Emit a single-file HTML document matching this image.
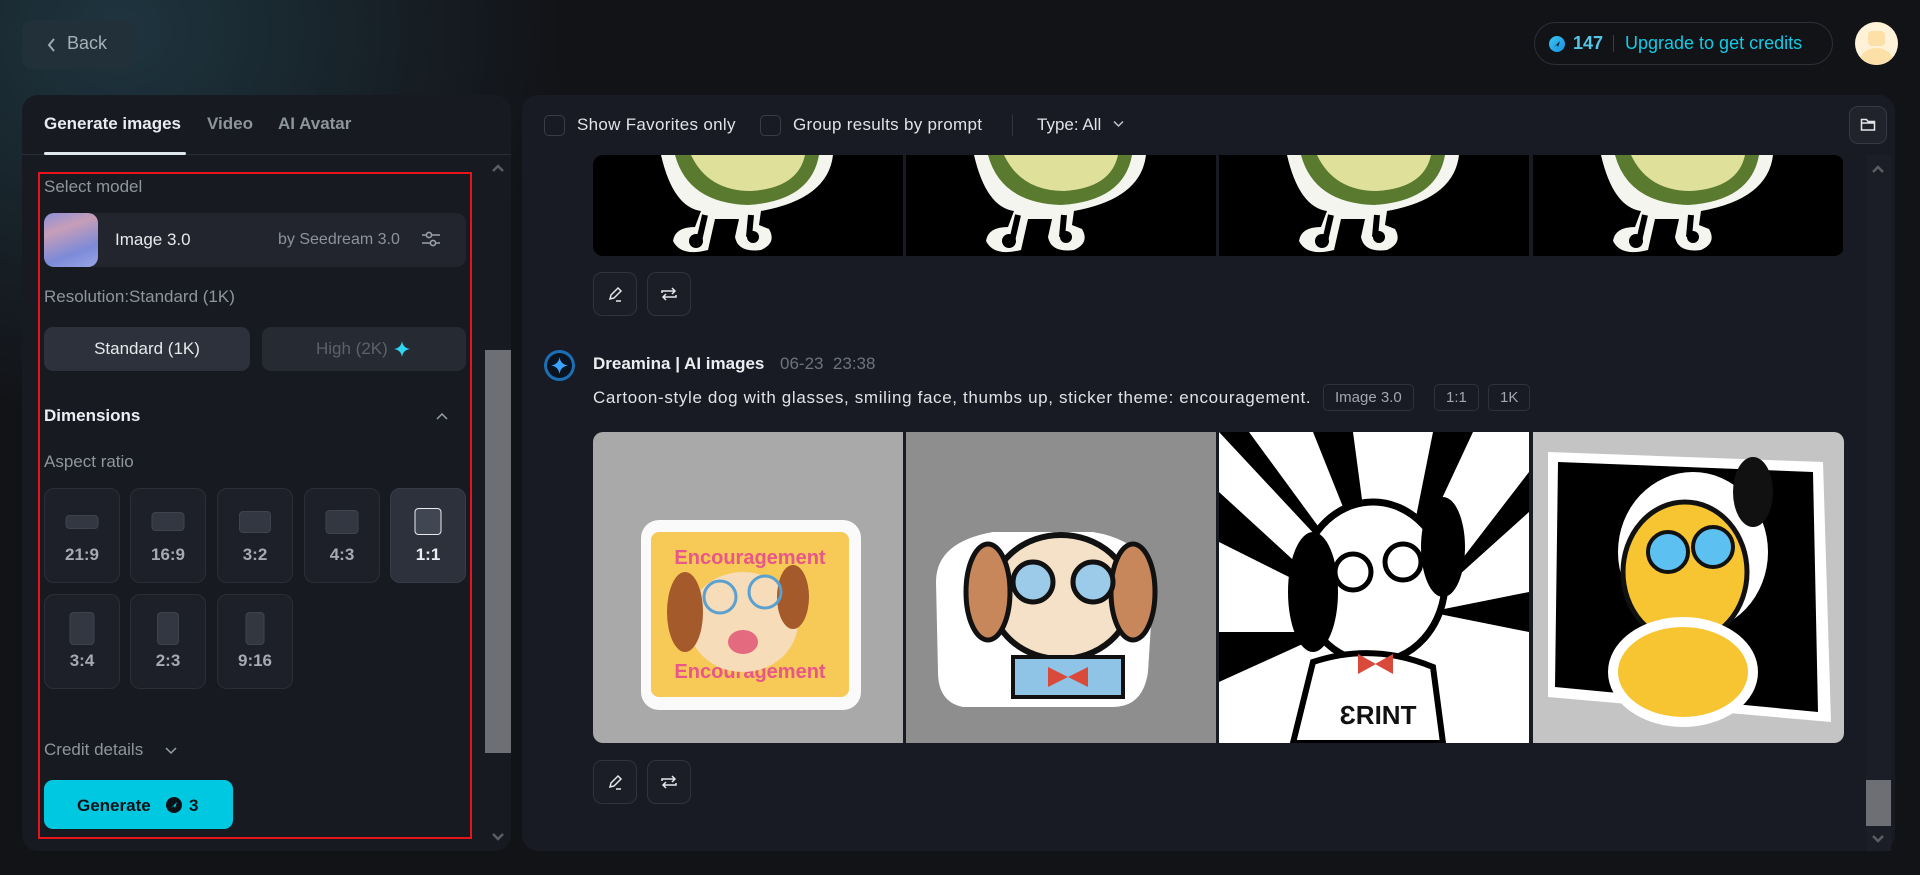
<!DOCTYPE html>
<html><head><meta charset="utf-8"><style>
*{box-sizing:border-box;margin:0;padding:0}
body{width:1920px;height:875px;overflow:hidden;background:#121317;font-family:"Liberation Sans",sans-serif;color:#e6e8ec;position:relative}
.a{position:absolute}
.glow{left:-200px;top:-250px;width:800px;height:700px;background:radial-gradient(ellipse at 40% 40%,rgba(40,80,95,.55),rgba(18,19,23,0) 65%)}
.t{position:absolute;white-space:nowrap}
.tile{position:absolute;width:76px;height:95px;background:#1d2028;border:1px solid #2b2e37;border-radius:10px}
.tile .s{position:absolute;left:50%;transform:translateX(-50%);background:#333741;border:1px solid #3f434c;border-radius:4px}
.tile .l{position:absolute;width:100%;text-align:center;top:56px;font-size:17px;font-weight:bold;color:#a6a9b1}
.ib{position:absolute;width:44px;height:44px;border:1px solid #30333c;background:#1b1e26;border-radius:9px}
.chip{position:absolute;top:384px;height:27px;border:1px solid #2f323b;border-radius:5px;font-size:15px;color:#a3a6ae;line-height:25px;padding:0 11px}
</style></head><body>
<div class="a glow"></div>
<!-- back -->
<div class="a" style="left:22px;top:20px;width:114px;height:49px;border-radius:10px;background:#213039"></div>
<svg class="a" style="left:47px;top:37px" width="10" height="16" viewBox="0 0 10 16"><path d="M7 2L2 8l5 6" stroke="#a0aab2" stroke-width="2" fill="none"/></svg>
<div class="t" style="left:67px;top:33px;font-size:18px;color:#a6b0b8">Back</div>
<!-- credits -->
<div class="a" style="left:1534px;top:22px;width:299px;height:43px;border:1px solid #2c2f36;border-radius:22px"></div>
<div class="a" style="left:1549px;top:36px;width:16px;height:16px;border-radius:50%;background:linear-gradient(135deg,#39c6f0,#1a8fe0)"></div>
<svg class="a" style="left:1552px;top:39px" width="10" height="10" viewBox="0 0 10 10"><path d="M2 8L8 2 6 8 5 6z" fill="#0d1a25"/></svg>
<div class="t" style="left:1573px;top:33px;font-size:18px;font-weight:bold;color:#54c6e8">147</div>
<div class="a" style="left:1613px;top:35px;width:1px;height:17px;background:#3a3d44"></div>
<div class="t" style="left:1625px;top:33px;font-size:18px;color:#13cbe6">Upgrade to get credits</div>
<div class="a" style="left:1855px;top:22px;width:43px;height:43px;border-radius:50%;background:#fff2d9;overflow:hidden"><div class="a" style="left:13px;top:9px;width:17px;height:15px;border-radius:4px;background:#fde0a8"></div><div class="a" style="left:5px;top:26px;width:33px;height:26px;border-radius:50%;background:#fde0a8"></div></div>

<!-- left panel -->
<div class="a" style="left:22px;top:95px;width:489px;height:756px;background:#171a21;border-radius:16px"></div>
<div class="t" style="left:44px;top:114px;font-size:17px;font-weight:bold;color:#e9ebef">Generate images</div>
<div class="t" style="left:207px;top:114px;font-size:17px;font-weight:bold;color:#8c949c">Video</div>
<div class="t" style="left:278px;top:114px;font-size:17px;font-weight:bold;color:#8c949c">AI Avatar</div>
<div class="a" style="left:22px;top:154px;width:489px;height:1px;background:#2a2d35"></div>
<div class="a" style="left:44px;top:152px;width:142px;height:3px;background:#dfe8ef;border-radius:2px"></div>
<svg class="a" style="left:491px;top:163px" width="14" height="10" viewBox="0 0 14 10"><path d="M2 8l5-5 5 5" stroke="#5a5d64" stroke-width="2.5" fill="none"/></svg>
<div class="a" style="left:485px;top:350px;width:26px;height:403px;background:#6e6f75"></div>
<svg class="a" style="left:491px;top:832px" width="14" height="10" viewBox="0 0 14 10"><path d="M2 2l5 5 5-5" stroke="#5a5d64" stroke-width="2.5" fill="none"/></svg>
<div class="a" style="left:38px;top:172px;width:434px;height:667px;border:2px solid #e8141c"></div>
<div class="t" style="left:44px;top:177px;font-size:17px;color:#8f959c">Select model</div>
<div class="a" style="left:44px;top:213px;width:422px;height:54px;background:#22252e;border-radius:10px"></div>
<div class="a" style="left:44px;top:213px;width:54px;height:54px;border-radius:10px;background:linear-gradient(160deg,#8e8fd8 0%,#c79eb8 30%,#7c8ad8 70%,#9aa5e6 100%)"></div>
<div class="t" style="left:115px;top:230px;font-size:17px;color:#e6e8ec">Image 3.0</div>
<div class="t" style="left:278px;top:231px;font-size:16px;color:#8d939b">by Seedream 3.0</div>
<svg class="a" style="left:421px;top:230px" width="20" height="18" viewBox="0 0 20 18"><g stroke="#9aa0a8" stroke-width="1.6" fill="none"><path d="M1 5h18M1 13h18"/><circle cx="8" cy="5" r="2.6" fill="#22252e"/><circle cx="12" cy="13" r="2.6" fill="#22252e"/></g></svg>
<div class="t" style="left:44px;top:287px;font-size:17px;color:#8f959c">Resolution:Standard (1K)</div>
<div class="a" style="left:44px;top:327px;width:206px;height:44px;background:#2d313b;border-radius:9px"></div>
<div class="t" style="left:44px;top:339px;width:206px;text-align:center;font-size:17px;color:#e6e8ec">Standard (1K)</div>
<div class="a" style="left:262px;top:327px;width:204px;height:44px;background:#262a33;border-radius:9px"></div>
<div class="t" style="left:316px;top:339px;font-size:17px;color:#5c616b">High (2K)</div>
<svg class="a" style="left:394px;top:341px" width="16" height="16" viewBox="0 0 16 16"><path d="M8 0Q9 7 16 8Q9 9 8 16Q7 9 0 8Q7 7 8 0z" fill="#2fd6f2"/></svg>
<div class="t" style="left:44px;top:406px;font-size:17px;font-weight:bold;color:#eceef1">Dimensions</div>
<svg class="a" style="left:436px;top:412px" width="12" height="8" viewBox="0 0 12 8"><path d="M1 7l5-5 5 5" stroke="#9aa0a8" stroke-width="1.5" fill="none"/></svg>
<div class="t" style="left:44px;top:452px;font-size:17px;color:#8f959c">Aspect ratio</div>
<div class="tile" style="left:44px;top:488px"><div class="s" style="top:26px;width:33px;height:14px"></div><div class="l">21:9</div></div>
<div class="tile" style="left:130px;top:488px"><div class="s" style="top:23px;width:33px;height:19px"></div><div class="l">16:9</div></div>
<div class="tile" style="left:217px;top:488px"><div class="s" style="top:22px;width:32px;height:22px"></div><div class="l">3:2</div></div>
<div class="tile" style="left:304px;top:488px"><div class="s" style="top:21px;width:33px;height:24px"></div><div class="l">4:3</div></div>
<div class="tile" style="left:390px;top:488px;background:#2c313c;border-color:#383c46"><div class="s" style="top:19px;width:27px;height:27px;background:#404652;border:1.5px solid #e8eaee"></div><div class="l" style="color:#eceef1">1:1</div></div>
<div class="tile" style="left:44px;top:594px"><div class="s" style="top:17px;width:25px;height:33px"></div><div class="l">3:4</div></div>
<div class="tile" style="left:130px;top:594px"><div class="s" style="top:17px;width:22px;height:33px"></div><div class="l">2:3</div></div>
<div class="tile" style="left:217px;top:594px"><div class="s" style="top:17px;width:19px;height:33px"></div><div class="l">9:16</div></div>
<div class="t" style="left:44px;top:740px;font-size:17px;color:#8f959c">Credit details</div>
<svg class="a" style="left:165px;top:747px" width="12" height="8" viewBox="0 0 12 8"><path d="M1 1l5 5 5-5" stroke="#9aa0a8" stroke-width="1.5" fill="none"/></svg>
<div class="a" style="left:44px;top:780px;width:189px;height:49px;background:#00c8e0;border-radius:9px"></div>
<div class="t" style="left:77px;top:796px;font-size:17px;font-weight:bold;color:#0b1116">Generate</div>
<div class="a" style="left:166px;top:797px;width:16px;height:16px;border-radius:50%;background:#0b1116"></div>
<svg class="a" style="left:169px;top:800px" width="10" height="10" viewBox="0 0 10 10"><path d="M2 8L8 2 6 8 5 6z" fill="#00c8e0"/></svg>
<div class="t" style="left:189px;top:796px;font-size:17px;font-weight:bold;color:#0b1116">3</div>

<!-- right panel -->
<div class="a" style="left:522px;top:95px;width:1373px;height:756px;background:#181b23;border-radius:16px"></div>
<div class="a" style="left:544px;top:115px;width:21px;height:21px;border:1px solid #3a3d45;border-radius:5px"></div>
<div class="t" style="left:577px;top:115px;font-size:17px;color:#dfe2e6;letter-spacing:.3px">Show Favorites only</div>
<div class="a" style="left:760px;top:115px;width:21px;height:21px;border:1px solid #3a3d45;border-radius:5px"></div>
<div class="t" style="left:793px;top:115px;font-size:17px;color:#dfe2e6;letter-spacing:.3px">Group results by prompt</div>
<div class="a" style="left:1012px;top:114px;width:1px;height:22px;background:#32353d"></div>
<div class="t" style="left:1037px;top:115px;font-size:17px;color:#dfe2e6">Type: All</div>
<svg class="a" style="left:1113px;top:120px" width="11" height="8" viewBox="0 0 11 8"><path d="M1 1.5l4.5 4.5 4.5-4.5" stroke="#c0c4ca" stroke-width="1.5" fill="none"/></svg>
<div class="a" style="left:1849px;top:106px;width:38px;height:38px;border:1px solid #363941;border-radius:9px;background:#20232b"></div>
<svg class="a" style="left:1860px;top:117px" width="16" height="15" viewBox="0 0 16 15"><path d="M1.5 2.5h5l1.5 2h6.5v8.5h-13zM1.5 6h13" stroke="#e4e6ea" stroke-width="1.5" fill="none"/></svg>
<div class="a" style="left:1866px;top:155px;width:25px;height:696px;background:#1b1e26"></div>
<svg class="a" style="left:1871px;top:164px" width="14" height="10" viewBox="0 0 14 10"><path d="M2 8l5-5 5 5" stroke="#5a5d64" stroke-width="2.5" fill="none"/></svg>
<div class="a" style="left:1866px;top:780px;width:25px;height:46px;background:#6e6f75"></div>
<svg class="a" style="left:1871px;top:834px" width="14" height="10" viewBox="0 0 14 10"><path d="M2 2l5 5 5-5" stroke="#5a5d64" stroke-width="2.5" fill="none"/></svg>

<!-- row1 avocado images -->
<svg class="a" style="left:593px;top:155px" width="1251" height="101" viewBox="0 0 1251 101">
<defs><clipPath id="c1"><rect width="1251" height="101" rx="10"/></clipPath>
<g id="av"><rect width="310" height="101" fill="#000"/><path d="M68 0Q80 52 108 56L102 72Q82 72 80 86Q88 102 115 95L122 64L146 64L142 82Q145 98 168 95Q184 88 176 74L166 70L168 56Q235 44 240 0z" fill="#f4f5ee"/><path d="M82 0Q95 48 155 50Q218 46 226 0z" fill="#5a7a30"/><path d="M98 0Q115 36 158 36Q205 33 212 0z" fill="#dfe09a"/><path d="M112 60l-6 26M158 60l-2 22" stroke="#000" stroke-width="6"/><circle cx="103" cy="86" r="7" fill="#000"/><circle cx="160" cy="82" r="6" fill="#000"/></g></defs>
<g clip-path="url(#c1)"><use href="#av"/><use href="#av" x="313"/><use href="#av" x="626"/><use href="#av" x="940"/></g>
</svg>
<div class="ib" style="left:593px;top:272px"></div>
<svg class="a" style="left:607px;top:285px" width="16" height="18" viewBox="0 0 16 18"><path d="M3 14l1-4 7-7 3 3-7 7-4 1zM9 16h5" stroke="#e4e6ea" stroke-width="1.5" fill="none"/></svg>
<div class="ib" style="left:647px;top:272px"></div>
<svg class="a" style="left:660px;top:285px" width="18" height="18" viewBox="0 0 18 18"><path d="M2 8V6h13M12 3l3 3-3 3M16 10v2H3M6 15l-3-3 3-3" stroke="#e4e6ea" stroke-width="1.5" fill="none"/></svg>

<!-- prompt row -->
<div class="a" style="left:544px;top:350px;width:31px;height:31px;border-radius:50%;background:#1c6fb4"></div>
<div class="a" style="left:547px;top:353px;width:25px;height:25px;border-radius:50%;background:#0a1420"></div>
<svg class="a" style="left:551px;top:357px" width="17" height="17" viewBox="0 0 16 16"><path d="M8 0Q9 7 16 8Q9 9 8 16Q7 9 0 8Q7 7 8 0z" fill="#3aa3ff"/></svg>
<div class="t" style="left:593px;top:354px;font-size:17px;font-weight:bold;color:#eceef1">Dreamina | AI images</div>
<div class="t" style="left:780px;top:354px;font-size:17px;color:#6e737b">06-23&nbsp;&nbsp;23:38</div>
<div class="t" style="left:593px;top:388px;font-size:17px;color:#dfe2e6;letter-spacing:.65px">Cartoon-style dog with glasses, smiling face, thumbs up, sticker theme: encouragement.</div>
<div class="chip" style="left:1323px">Image 3.0</div>
<div class="chip" style="left:1434px">1:1</div>
<div class="chip" style="left:1488px">1K</div>

<!-- row2 dog images -->
<svg class="a" style="left:593px;top:432px" width="1251" height="311" viewBox="0 0 1251 311">
<defs><clipPath id="c2"><rect width="1251" height="311" rx="10"/></clipPath></defs>
<g clip-path="url(#c2)">
<rect width="310" height="311" fill="#a9a9a9"/>
<rect x="48" y="88" width="220" height="190" rx="18" fill="#fafafa"/>
<rect x="58" y="100" width="198" height="165" rx="8" fill="#f7c957"/>
<text x="157" y="132" text-anchor="middle" font-family="Liberation Sans" font-weight="bold" font-size="20" fill="#e9568a">Encouragement</text>
<text x="157" y="246" text-anchor="middle" font-family="Liberation Sans" font-weight="bold" font-size="20" fill="#e9568a">Encouragement</text>
<ellipse cx="150" cy="190" rx="55" ry="50" fill="#f6dcb8"/><ellipse cx="92" cy="180" rx="18" ry="40" fill="#a45a2a"/><ellipse cx="200" cy="165" rx="16" ry="32" fill="#a45a2a"/>
<circle cx="127" cy="165" r="16" fill="none" stroke="#5aa0d0" stroke-width="3"/><circle cx="172" cy="160" r="16" fill="none" stroke="#5aa0d0" stroke-width="3"/>
<ellipse cx="150" cy="210" rx="15" ry="12" fill="#e46a80"/>

<rect x="313" width="310" height="311" fill="#8e8e8e"/>
<path d="M343 150Q343 110 400 100L500 100Q560 110 560 160L555 240Q550 275 520 275L370 275Q345 270 345 240z" fill="#fff"/>
<ellipse cx="468" cy="165" rx="70" ry="62" fill="#f5e1c8" stroke="#111" stroke-width="6"/>
<ellipse cx="395" cy="160" rx="22" ry="48" fill="#c7875a" stroke="#111" stroke-width="5"/><ellipse cx="540" cy="160" rx="22" ry="48" fill="#c7875a" stroke="#111" stroke-width="5"/>
<circle cx="440" cy="150" r="20" fill="#9ccbe9" stroke="#111" stroke-width="5"/><circle cx="500" cy="150" r="20" fill="#9ccbe9" stroke="#111" stroke-width="5"/>
<rect x="420" y="225" width="110" height="40" fill="#90c4e6" stroke="#111" stroke-width="4"/><path d="M455 235l20 10-20 10zM495 235l-20 10 20 10z" fill="#d94a3a"/>

<rect x="626" width="310" height="311" fill="#fff"/>
<path d="M626 0h30l110 150zM720 0h40l20 150zM840 0h40l-70 150zM936 40v40l-100 90zM626 60v50l120 60zM936 160v40l-100-20zM626 200v50l110-50z" fill="#000"/>
<ellipse cx="780" cy="150" rx="72" ry="80" fill="#fff" stroke="#000" stroke-width="7"/>
<ellipse cx="720" cy="160" rx="25" ry="60" fill="#000"/><ellipse cx="850" cy="115" rx="22" ry="50" fill="#000"/>
<circle cx="760" cy="140" r="18" fill="#fff" stroke="#000" stroke-width="5"/><circle cx="810" cy="130" r="18" fill="#fff" stroke="#000" stroke-width="5"/>
<path d="M720 230Q780 210 840 235L850 311H700z" fill="#fff" stroke="#000" stroke-width="6"/>
<path d="M765 222l18 10-18 10zM800 222l-18 10 18 10z" fill="#d94a3a"/>
<text x="785" y="292" text-anchor="middle" font-family="Liberation Sans" font-weight="bold" font-size="26" fill="#111">ƐRINT</text>

<rect x="940" width="311" height="311" fill="#c4c4c4"/>
<path d="M955 20L1230 30L1238 290L955 265z" fill="#fff"/>
<path d="M965 30L1220 40L1225 280L962 255z" fill="#000"/>
<ellipse cx="1100" cy="120" rx="75" ry="80" fill="#fff"/>
<ellipse cx="1092" cy="140" rx="62" ry="70" fill="#f7c531" stroke="#111" stroke-width="5"/>
<ellipse cx="1090" cy="240" rx="70" ry="50" fill="#f7c531" stroke="#fff" stroke-width="10"/>
<circle cx="1075" cy="120" r="20" fill="#5cc0f0" stroke="#111" stroke-width="4"/><circle cx="1120" cy="115" r="20" fill="#5cc0f0" stroke="#111" stroke-width="4"/>
<ellipse cx="1160" cy="60" rx="20" ry="35" fill="#111"/>
</g></svg>
<div class="ib" style="left:593px;top:760px"></div>
<svg class="a" style="left:607px;top:773px" width="16" height="18" viewBox="0 0 16 18"><path d="M3 14l1-4 7-7 3 3-7 7-4 1zM9 16h5" stroke="#e4e6ea" stroke-width="1.5" fill="none"/></svg>
<div class="ib" style="left:647px;top:760px"></div>
<svg class="a" style="left:660px;top:773px" width="18" height="18" viewBox="0 0 18 18"><path d="M2 8V6h13M12 3l3 3-3 3M16 10v2H3M6 15l-3-3 3-3" stroke="#e4e6ea" stroke-width="1.5" fill="none"/></svg>
</body></html>
